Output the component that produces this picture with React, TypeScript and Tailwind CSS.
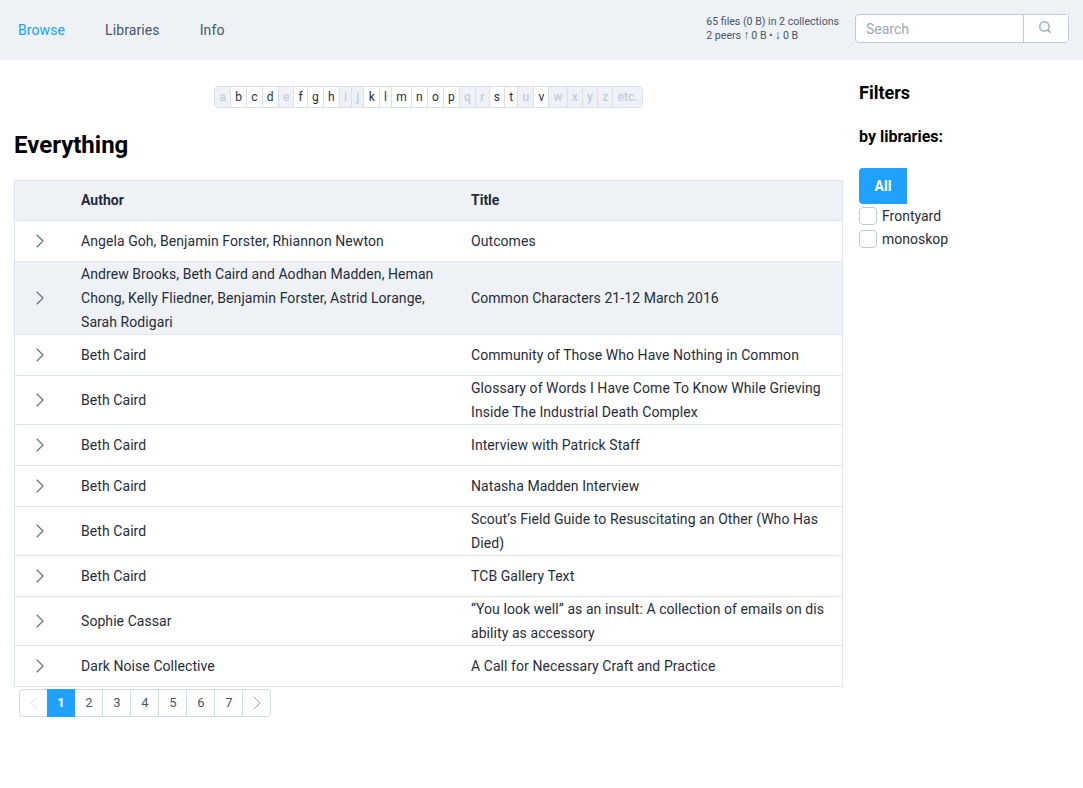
import { ChevronLeft, ChevronRight, Search } from "lucide-react";

const letters: [string, boolean][] = [
  ["a", false], ["b", true], ["c", true], ["d", true], ["e", false], ["f", true], ["g", true], ["h", true],
  ["i", false], ["j", false], ["k", true], ["l", true], ["m", true], ["n", true], ["o", true], ["p", true],
  ["q", false], ["r", false], ["s", true], ["t", true], ["u", false], ["v", true], ["w", false], ["x", false],
  ["y", false], ["z", false], ["etc.", false],
];

const books: { author: string; title: React.ReactNode; striped?: boolean }[] = [
  { author: "Angela Goh, Benjamin Forster, Rhiannon Newton", title: "Outcomes" },
  {
    author: "Andrew Brooks, Beth Caird and Aodhan Madden, Heman Chong, Kelly Fliedner, Benjamin Forster, Astrid Lorange, Sarah Rodigari",
    title: "Common Characters 21-12 March 2016",
    striped: true,
  },
  { author: "Beth Caird", title: "Community of Those Who Have Nothing in Common" },
  { author: "Beth Caird", title: "Glossary of Words I Have Come To Know While Grieving Inside The Industrial Death Complex" },
  { author: "Beth Caird", title: "Interview with Patrick Staff" },
  { author: "Beth Caird", title: "Natasha Madden Interview" },
  { author: "Beth Caird", title: "Scout’s Field Guide to Resuscitating an Other (Who Has Died)" },
  { author: "Beth Caird", title: "TCB Gallery Text" },
  { author: "Sophie Cassar", title: <>“You look well” as an insult: A collection of emails on dis<wbr />ability as accessory</> },
  { author: "Dark Noise Collective", title: "A Call for Necessary Craft and Practice" },
];

function Arrow({ children }: { children: string }) {
  return <span className="-mx-[0.5px] font-['Liberation_Sans',sans-serif] text-[12px] leading-none">{children}</span>;
}

function Header() {
  return (
    <header className="flex h-[60px] items-center bg-[#eef1f6]">
      <nav className="flex h-full w-[245px] items-center gap-[40px] pl-[18px] text-sm tracking-[0.1px] text-[#48576a]">
        <a className="text-[#20a0ff]">Browse</a>
        <a>Libraries</a>
        <a>Info</a>
      </nav>
      <div className="ml-auto mb-[2px] mr-[16px] text-[10.6px] leading-[14px] text-[#48576a]">
        <div>65 files (0 B) in 2 collections</div>
        <div>
          2 peers <Arrow>↑</Arrow> 0 B • <Arrow>↓</Arrow> 0 B
        </div>
      </div>
      <div className="mb-[3px] mr-[14px] flex h-[29px] w-[214px] rounded border border-[#bfcbd9] bg-white">
        <input
          placeholder="Search"
          className="h-full w-[167px] px-[10px] text-sm outline-none placeholder:text-[#97a8be]"
        />
        <button className="flex w-[46px] items-center justify-center border-l border-[#bfcbd9] bg-[#fbfdff]">
          <Search size={14} strokeWidth={2.25} className="mb-[3px] mr-[2px] text-[#97a8be]" />
        </button>
      </div>
    </header>
  );
}

function Alphabet() {
  return (
    <div className="flex justify-center pt-[26px]">
      <div className="flex h-[22px] overflow-hidden rounded border border-[#d8e0ea] text-xs">
        {letters.map(([l, on], i) => (
          <a
            key={l}
            className={`flex items-center px-[4.15px] ${i > 0 ? "border-l border-[#d8e0ea]" : ""} ${
              on ? "bg-white text-[#1f2d3d]" : "bg-[#eef1f6] font-medium text-[#c3cfdd]"
            }`}
          >
            {l}
          </a>
        ))}
      </div>
    </div>
  );
}

function BookTable() {
  return (
    <table className="w-[829px] table-fixed border-collapse border border-[#dfe6ec] text-sm text-[#1f2d3d]">
      <thead>
        <tr className="h-[40px] bg-[#eef1f6] text-left">
          <th className="w-[51.5px]" />
          <th className="w-[390px] px-[15px] pb-[2px] font-bold">Author</th>
          <th className="px-[15px] pb-[2px] font-bold">Title</th>
        </tr>
      </thead>
      <tbody>
        {books.map((b, i) => (
          <tr key={i} className={`h-[41px] border-t border-[#dfe6ec] leading-6 tracking-[0.07px] ${b.striped ? "bg-[#eef1f6]" : ""}`}>
            <td className="pl-[13px]">
              <ChevronRight size={24} strokeWidth={1.1} className="text-[#5e6d82]" />
            </td>
            <td className="px-[15px]">{b.author}</td>
            <td className="px-[15px]">{b.title}</td>
          </tr>
        ))}
      </tbody>
    </table>
  );
}

function Pagination() {
  const cell = "flex h-[26px] w-[28px] items-center justify-center border-r pl-px";
  const end = "flex h-[26px] w-[27px] items-center justify-center";
  return (
    <div className="ml-[5px] mt-[2px] flex w-fit rounded-sm border border-[#d1dbe5] text-[13px] text-[#48576a]">
      <a className={end}>
        <ChevronLeft size={24} strokeWidth={1} className="text-[#e4e4e4]" />
      </a>
      {[1, 2, 3, 4, 5, 6, 7].map((n) => (
        <a key={n} className={`${cell} ${n === 1 ? "-my-px h-[28px] border-[#20a0ff] bg-[#20a0ff] font-bold text-white" : "border-[#d1dbe5]"}`}>
          {n}
        </a>
      ))}
      <a className={end}>
        <ChevronRight size={24} strokeWidth={1} className="text-[#97a8be]" />
      </a>
    </div>
  );
}

function Filters() {
  return (
    <aside className="ml-[16px] pt-[22px] text-black">
      <h3 className="text-lg leading-[22px] font-bold">Filters</h3>
      <h4 className="mt-[23px] text-base leading-[20px] font-bold">by libraries:</h4>
      <button className="mt-[21px] block h-[36px] w-[48px] rounded-l bg-[#20a0ff] text-sm font-bold text-white">All</button>
      {["Frontyard", "monoskop"].map((name) => (
        <label key={name} className="mt-[3px] flex h-[20px] items-center gap-[5px] text-sm text-[#1f2d3d] first-of-type:mt-[2px]">
          <span className="h-[18px] w-[18px] rounded border border-[#bfcbd9] bg-white" />
          {name}
        </label>
      ))}
    </aside>
  );
}

export default function App() {
  return (
    <div className="min-h-[788px] bg-white font-['Roboto',sans-serif]">
      <Header />
      <main className="flex pl-[14px]">
        <div className="w-[829px]">
          <Alphabet />
          <h2 className="mt-[21px] mb-[19px] text-2xl leading-[32px] font-bold text-black">Everything</h2>
          <BookTable />
          <Pagination />
        </div>
        <Filters />
      </main>
    </div>
  );
}
